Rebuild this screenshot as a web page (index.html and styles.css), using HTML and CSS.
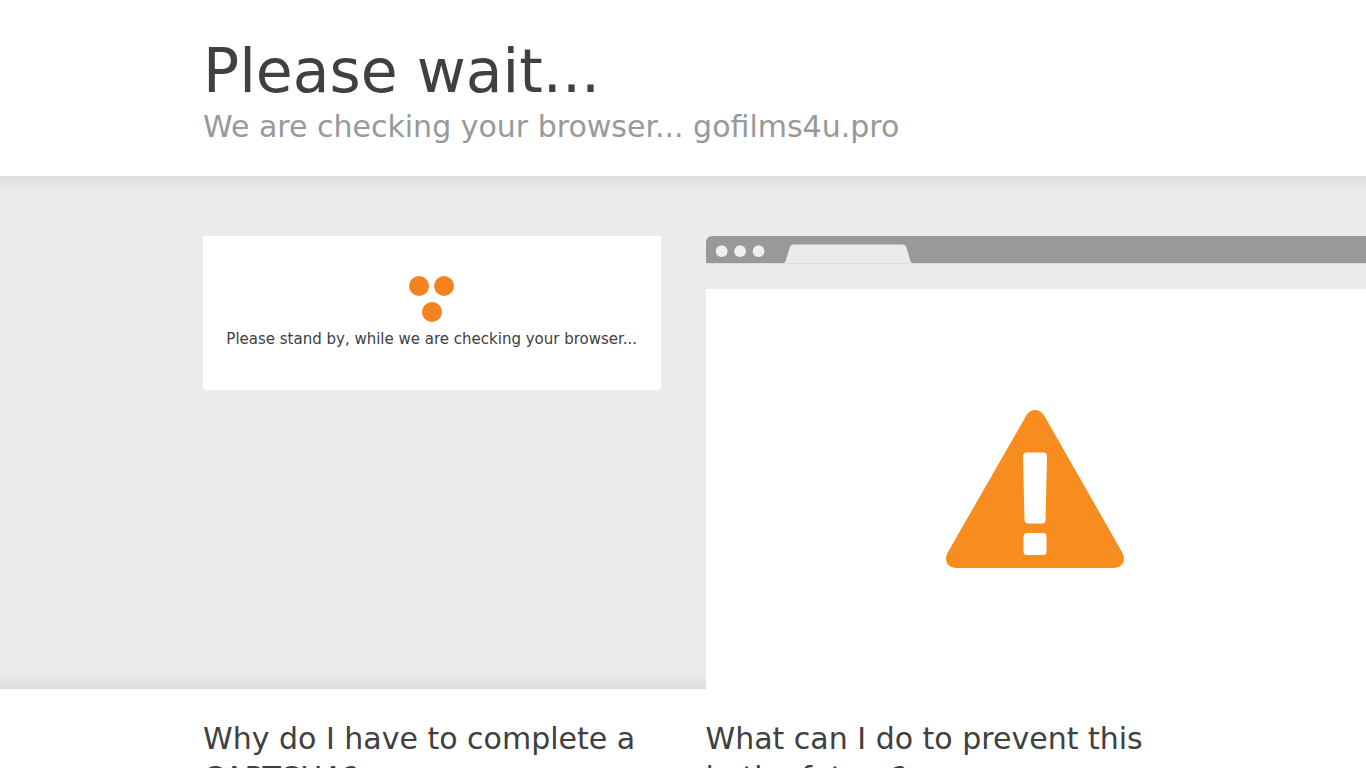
FILE: index.html
```html
<!DOCTYPE html>
<html lang="en">
<head>
<meta charset="utf-8">
<meta name="viewport" content="width=device-width, initial-scale=1">
<title>Please wait...</title>
<link rel="stylesheet" href="styles.css">
</head>
<body>
<header class="header wrapper">
  <h1 class="title">Please wait...</h1>
  <h2 class="subtitle">We are checking your browser... gofilms4u.pro</h2>
</header>
<main>
  <section class="highlight">
    <div class="wrapper columns">
      <div class="card">
        <svg class="dots" width="46" height="46" viewBox="0 0 46 46" aria-hidden="true">
          <circle cx="10" cy="10" r="10"/><circle cx="35" cy="10" r="10"/><circle cx="23" cy="36" r="10"/>
        </svg>
        <p class="status">Please stand by, while we are checking your browser...</p>
      </div>
      <div class="browser">
        <div class="browser-bar">
          <svg width="208" height="27" viewBox="0 0 208 27" aria-hidden="true">
            <g fill="#f0f0f0"><circle cx="15.7" cy="15.200" r="5.900"/><circle cx="34.100" cy="15.200" r="5.900"/><circle cx="52.600" cy="15.200" r="5.900"/></g>
            <path fill="#ebebeb" d="M78 27Q79 26.500 79.500 25L84 11Q84.800 8.500 87 8.500H197Q199.500 8.500 200.300 11L204.500 25Q205 26.500 206 27Z"/>
          </svg>
        </div>
        <div class="browser-tools"></div>
        <div class="browser-page">
          <svg class="warning" width="178" height="158" viewBox="0 0 178 158" role="img" aria-label="Warning">
            <path fill="#f78d1f" d="M79.500 7C84-2.200 94-2.200 99 7L176 142C180.500 150 177 158 167 158H11C1 158-2.500 150 2 142Z"/>
            <path fill="#fff" d="M81 42.500H97Q101 42.500 101 46.500L99.500 110Q99.300 113.500 96 113.500H82Q79 113.500 78.500 110L77 46.500Q77 42.500 81 42.500Z"/>
            <rect x="77.500" y="123" width="23" height="22" rx="3.500" fill="#fff"/>
          </svg>
        </div>
      </div>
    </div>
  </section>
  <section class="wrapper columns questions">
    <h2 class="question">Why do I have to complete a CAPTCHA?</h2>
    <h2 class="question">What can I do to prevent this in the future?</h2>
  </section>
</main>
</body>
</html>
```
FILE: styles.css
```css
* {
  box-sizing: border-box;
}

body {
  margin: 0;
  background: #fff;
  color: #404040;
  font-family: "DejaVu Sans", sans-serif;
  font-size: 15px;
  line-height: 1.5;
}

h1,
h2,
p {
  margin: 0;
  font-weight: 400;
}

.wrapper {
  width: 90%;
  max-width: 960px;
  margin: 0 auto;
}

.header {
  padding: 35px 0 30px;
}

.title {
  font-size: 60px;
  line-height: 72px;
}

.subtitle {
  color: #999;
  font-size: 30px;
  line-height: 39px;
}

.columns {
  display: grid;
  grid-template-columns: repeat(2, minmax(0, 1fr));
  column-gap: 45px;
}

.highlight {
  padding-top: 60px;
  overflow: hidden;
  background:
    linear-gradient(to bottom, #dedede, #ebebeb) top / 100% 16px no-repeat,
    linear-gradient(to top, #dedede, #ebebeb) bottom / 100% 16px no-repeat,
    #ebebeb;
}

.card {
  align-self: start;
  padding: 40px 20px;
  border-radius: 2px;
  background: #fff;
  text-align: center;
}

.dots {
  display: block;
  margin: 0 auto 6px;
  fill: #f58220;
}

.status {
  font-size: 15px;
  line-height: 22px;
}

.browser {
  width: 960px;
  overflow: hidden;
  border-radius: 6px 0 0 0;
}

.browser-bar {
  height: 28px;
  border-bottom: 1px solid #dedede;
  background: #999;
}

.browser-bar svg {
  display: block;
}

.browser-tools {
  height: 25px;
  background: #ebebeb;
}

.browser-page {
  min-height: 400px;
  padding: 121px 240px;
  background: #fff;
}

.warning {
  display: block;
}

.questions {
  padding: 30px 0;
}

.question {
  font-size: 30px;
  line-height: 39px;
}
```
